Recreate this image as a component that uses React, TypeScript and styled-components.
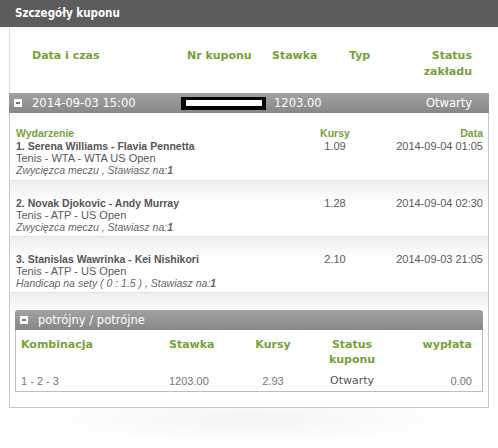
import styled, { createGlobalStyle } from "styled-components";

const GlobalStyle = createGlobalStyle`
  body {
    margin: 0;
    background: #fff;
    font-family: "Liberation Sans", Arial, sans-serif;
  }
`;

const green = "#76a23a";

const Page = styled.div`
  width: 498px;
`;

const TitleBar = styled.div`
  height: 27px;
  line-height: 27px;
  background: #5c5c5c;
  color: #fff;
  font-family: "DejaVu Sans Condensed", "Liberation Sans", sans-serif;
  font-weight: bold;
  font-size: 11.5px;
  padding-left: 15px;
`;

const Panel = styled.div`
  margin: 0 9px 0 9px;
`;

const HeaderRow = styled.div`
  display: grid;
  grid-template-columns: 177px 85px 77px 1fr auto;
  border-left: 1px solid #dcdcdc;
  padding: 21px 17px 13px 0;
  font-family: "DejaVu Sans", Verdana, sans-serif;
  font-weight: bold;
  font-size: 11px;
  line-height: 16px;
  color: ${green};
`;

const HeadCell = styled.div<{ right?: boolean; first?: boolean }>`
  text-align: ${p => (p.right ? "right" : "left")};
  padding-left: ${p => (p.first ? "22px" : "0")};
`;

const Toggle = styled.span`
  position: relative;
  display: inline-block;
  width: 8px;
  height: 8px;
  background: #fff;
  flex-shrink: 0;

  &::after {
    content: "";
    position: absolute;
    left: 2px;
    right: 2px;
    top: 3px;
    height: 2px;
    background: #777;
  }
`;

const Bar = styled.div<{ rounded?: boolean }>`
  display: grid;
  grid-template-columns: 172px 93px 1fr auto;
  align-items: center;
  height: 20px;
  background: linear-gradient(#a2a2a2, #878787);
  color: #fff;
  font-family: "DejaVu Sans", Verdana, sans-serif;
  font-size: 11.5px;
  padding-right: 17px;
  border-radius: ${p => (p.rounded ? "3px 3px 0 0" : "0")};
`;

const BarLead = styled.div<{ indent: number }>`
  display: flex;
  align-items: center;
  gap: 10px;
  padding-left: ${p => p.indent}px;
  white-space: nowrap;
`;

const Redacted = styled.span`
  display: block;
  width: 76px;
  height: 6px;
  background: #fff;
  border-style: solid;
  border-color: #000;
  border-width: 3px 4px 4px 5px;
`;

const BarRight = styled.div`
  text-align: right;
`;

const CouponBody = styled.div`
  border: 1px solid #c8c8c8;
  border-top: none;
`;

const EventRow = styled.div<{ shaded?: boolean; first?: boolean }>`
  display: grid;
  grid-template-columns: 1fr 60px 118px;
  padding: ${p => (p.first ? "14px 5px 4px 6px" : "16px 5px 3px 6px")};
  border-bottom: 1px solid #e2e2e2;
  background: ${p => (p.shaded ? "linear-gradient(#efefef, #fff 22px)" : "#fff")};
  font-size: 11px;
  line-height: 12px;
  color: #5a5a5a;
`;

const Col = styled.div<{ align: "left" | "center" | "right" }>`
  text-align: ${p => p.align};
  white-space: nowrap;
`;

const Label = styled.div`
  font-weight: bold;
  font-size: 10.5px;
  color: ${green};
  margin-bottom: 1px;
`;

const EventName = styled.div`
  font-weight: bold;
  font-size: 10.5px;
  color: #555;
`;

const EventInfo = styled.div`
  color: #5a5a5a;
`;

const BetInfo = styled.div`
  font-style: italic;
  font-size: 10.5px;
  color: #666;

  b {
    font-weight: bold;
  }
`;

const SystemWrap = styled.div`
  padding: 17px 5px 15px 5px;
  background: linear-gradient(#efefef, #fff 22px);
`;

const SystemBox = styled.div`
  border: 1px solid #bdbdbd;
  border-top: none;
`;

const SystemGrid = styled.div`
  display: grid;
  grid-template-columns: 148px 71px 66px 92px 1fr;
  padding: 7px 10px 3px 5px;
  row-gap: 7px;
`;

const SysHead = styled.div<{ align: "left" | "center" | "right" }>`
  text-align: ${p => p.align};
  font-family: "DejaVu Sans", Verdana, sans-serif;
  font-weight: bold;
  font-size: 11px;
  line-height: 15px;
  color: ${green};
`;

const SysCell = styled.div<{ align: "left" | "center" | "right"; strong?: boolean }>`
  text-align: ${p => p.align};
  font-family: ${p => (p.strong ? `"DejaVu Sans", Verdana, sans-serif` : `"Liberation Sans", Arial, sans-serif`)};
  font-size: 11px;
  line-height: 14px;
  color: ${p => (p.strong ? "#555" : "#777")};
`;

const Shadow = styled.div`
  height: 30px;
  margin: 0 10px;
  background: radial-gradient(ellipse 55% 100% at 50% 35%, rgba(0, 0, 0, 0.045), rgba(0, 0, 0, 0) 85%);
`;

type Event = {
  name: string;
  sport: string;
  bet: string;
  odds: string;
  date: string;
};

const events: Event[] = [
  {
    name: "1. Serena Williams - Flavia Pennetta",
    sport: "Tenis - WTA - WTA US Open",
    bet: "Zwycięzca meczu , Stawiasz na:",
    odds: "1.09",
    date: "2014-09-04 01:05",
  },
  {
    name: "2. Novak Djokovic - Andy Murray",
    sport: "Tenis - ATP - US Open",
    bet: "Zwycięzca meczu , Stawiasz na:",
    odds: "1.28",
    date: "2014-09-04 02:30",
  },
  {
    name: "3. Stanislas Wawrinka - Kei Nishikori",
    sport: "Tenis - ATP - US Open",
    bet: "Handicap na sety ( 0 : 1.5 ) , Stawiasz na:",
    odds: "2.10",
    date: "2014-09-03 21:05",
  },
];

export default function App() {
  return (
    <Page>
      <GlobalStyle />
      <TitleBar>Szczegóły kuponu</TitleBar>
      <Panel>
        <HeaderRow>
          <HeadCell first>Data i czas</HeadCell>
          <HeadCell>Nr kuponu</HeadCell>
          <HeadCell>Stawka</HeadCell>
          <HeadCell>Typ</HeadCell>
          <HeadCell right>
            Status
            <br />
            zakładu
          </HeadCell>
        </HeaderRow>
        <Bar>
          <BarLead indent={5}>
            <Toggle />
            2014-09-03 15:00
          </BarLead>
          <Redacted />
          <div>1203.00</div>
          <BarRight>Otwarty</BarRight>
        </Bar>
        <CouponBody>
          {events.map((ev, i) => (
            <EventRow key={ev.name} first={i === 0} shaded={i > 0}>
              <Col align="left">
                {i === 0 && <Label>Wydarzenie</Label>}
                <EventName>{ev.name}</EventName>
                <EventInfo>{ev.sport}</EventInfo>
                <BetInfo>
                  {ev.bet}
                  <b>1</b>
                </BetInfo>
              </Col>
              <Col align="center">
                {i === 0 && <Label>Kursy</Label>}
                <div>{ev.odds}</div>
              </Col>
              <Col align="right">
                {i === 0 && <Label>Data</Label>}
                <div>{ev.date}</div>
              </Col>
            </EventRow>
          ))}
          <SystemWrap>
            <Bar rounded style={{ gridTemplateColumns: "1fr" }}>
              <BarLead indent={5}>
                <Toggle />
                potrójny / potrójne
              </BarLead>
            </Bar>
            <SystemBox>
              <SystemGrid>
                <SysHead align="left">Kombinacja</SysHead>
                <SysHead align="left">Stawka</SysHead>
                <SysHead align="center">Kursy</SysHead>
                <SysHead align="center">
                  Status
                  <br />
                  kuponu
                </SysHead>
                <SysHead align="right">wypłata</SysHead>
                <SysCell align="left">1 - 2 - 3</SysCell>
                <SysCell align="left">1203.00</SysCell>
                <SysCell align="center">2.93</SysCell>
                <SysCell align="center" strong>
                  Otwarty
                </SysCell>
                <SysCell align="right">0.00</SysCell>
              </SystemGrid>
            </SystemBox>
          </SystemWrap>
        </CouponBody>
      </Panel>
      <Shadow />
    </Page>
  );
}
